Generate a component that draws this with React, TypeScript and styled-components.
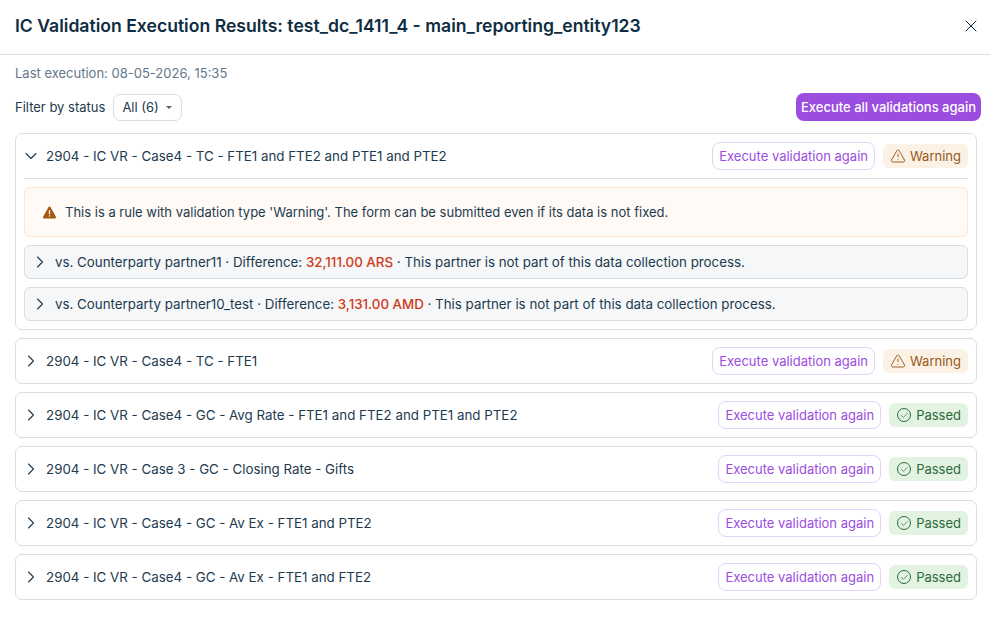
import styled, { createGlobalStyle } from "styled-components";
import { AlertTriangle, Check, ChevronDown, ChevronRight, X } from "lucide-react";

const GlobalStyle = createGlobalStyle`
  html, body {
    margin: 0;
    padding: 0;
    background: #ffffff;
  }
  body {
    font-family: "Inter", "Liberation Sans", sans-serif;
    color: #1d3a4f;
  }
  * {
    box-sizing: border-box;
  }
`;

type Status = "warning" | "passed";

const rules: { name: string; status: Status }[] = [
  { name: "2904 - IC VR - Case4 - TC - FTE1", status: "warning" },
  { name: "2904 - IC VR - Case4 - GC - Avg Rate - FTE1 and FTE2 and PTE1 and PTE2", status: "passed" },
  { name: "2904 - IC VR - Case 3 - GC - Closing Rate - Gifts", status: "passed" },
  { name: "2904 - IC VR - Case4 - GC - Av Ex - FTE1 and PTE2", status: "passed" },
  { name: "2904 - IC VR - Case4 - GC - Av Ex - FTE1 and FTE2", status: "passed" },
];

const partners = [
  { name: "partner11", amount: "32,111.00 ARS" },
  { name: "partner10_test", amount: "3,131.00 AMD" },
];

const StatusBadge: React.FC<{ status: Status }> = ({ status }) => (
  <Badge $status={status}>
    {status === "warning" ? (
      <AlertTriangle size={16} strokeWidth={1.4} />
    ) : (
      <PassedIcon>
        <Check size={9} strokeWidth={1.8} />
      </PassedIcon>
    )}
    {status === "warning" ? "Warning" : "Passed"}
  </Badge>
);

const App: React.FC = () => {
  return (
    <Page>
      <GlobalStyle />
      <Header>
        <Title>IC Validation Execution Results: test_dc_1411_4 - main_reporting_entity123</Title>
        <CloseButton>
          <X size={20} strokeWidth={1.2} />
        </CloseButton>
      </Header>
      <Body>
        <LastExecution>Last execution: 08-05-2026, 15:35</LastExecution>
        <Toolbar>
          <FilterGroup>
            <FilterLabel>Filter by status</FilterLabel>
            <FilterSelect>
              All (6)
              <Caret />
            </FilterSelect>
          </FilterGroup>
          <PrimaryButton>Execute all validations again</PrimaryButton>
        </Toolbar>
        <CardList>
          <Card>
            <CardHeader $open>
              <Toggle>
                <ChevronDown size={20} strokeWidth={1.3} />
              </Toggle>
              <RuleName>2904 - IC VR - Case4 - TC - FTE1 and FTE2 and PTE1 and PTE2</RuleName>
              <SecondaryButton>Execute validation again</SecondaryButton>
              <StatusBadge status="warning" />
            </CardHeader>
            <CardBody>
              <Notice>
                <NoticeIcon viewBox="0 0 16 16">
                  <path
                    fillRule="evenodd"
                    d="M8 1.6c.4 0 .8.2 1 .6l5.8 10.4c.4.8-.1 1.8-1 1.8H2.2c-.9 0-1.4-1-1-1.8L7 2.2c.2-.4.6-.6 1-.6zM7.3 5.6v4.2h1.4V5.6H7.3zm0 5.2v1.4h1.4v-1.4H7.3z"
                  />
                </NoticeIcon>
                This is a rule with validation type 'Warning'. The form can be submitted even if its data is not fixed.
              </Notice>
              {partners.map((partner) => (
                <PartnerRow key={partner.name}>
                  <Toggle>
                    <ChevronRight size={20} strokeWidth={1.3} />
                  </Toggle>
                  <span>
                    vs. Counterparty {partner.name} · Difference: <Amount>{partner.amount}</Amount> · This partner is
                    not part of this data collection process.
                  </span>
                </PartnerRow>
              ))}
            </CardBody>
          </Card>
          {rules.map((rule) => (
            <Card key={rule.name}>
              <CardHeader>
                <Toggle>
                  <ChevronRight size={20} strokeWidth={1.3} />
                </Toggle>
                <RuleName>{rule.name}</RuleName>
                <SecondaryButton>Execute validation again</SecondaryButton>
                <StatusBadge status={rule.status} />
              </CardHeader>
            </Card>
          ))}
        </CardList>
      </Body>
    </Page>
  );
};

export default App;

const Page = styled.div`
  width: 990px;
  height: 619px;
  overflow: hidden;
  background: #ffffff;
`;

const Header = styled.header`
  height: 55px;
  padding: 0 9px 2px 15px;
  display: flex;
  align-items: center;
  justify-content: space-between;
  border-bottom: 1px solid #d8dee4;
`;

const Title = styled.h1`
  margin: 0;
  font-size: 17.6px;
  line-height: 24px;
  font-weight: 600;
  color: #0f2d42;
`;

const CloseButton = styled.button`
  width: 20px;
  height: 20px;
  padding: 0;
  border: 0;
  background: none;
  color: #0f2d42;
  display: flex;
  cursor: pointer;
`;

const Body = styled.div`
  padding: 9px 9px 0 15px;
`;

const LastExecution = styled.div`
  font-size: 13px;
  line-height: 18px;
  color: #64778a;
`;

const Toolbar = styled.div`
  margin-top: 11px;
  height: 28px;
  display: flex;
  align-items: center;
  justify-content: space-between;
`;

const FilterGroup = styled.div`
  display: flex;
  align-items: center;
  gap: 8px;
`;

const FilterLabel = styled.span`
  font-size: 13px;
  color: #1d3a4f;
`;

const FilterSelect = styled.button`
  height: 27px;
  padding: 0 9px 0 8px;
  display: flex;
  align-items: center;
  gap: 7px;
  border: 1px solid #d8dee4;
  border-radius: 7px;
  background: #ffffff;
  font: inherit;
  font-size: 13px;
  color: #1d3a4f;
`;

const Caret = styled.span`
  width: 0;
  height: 0;
  border-left: 3px solid transparent;
  border-right: 3px solid transparent;
  border-top: 3px solid #4a6072;
`;

const PrimaryButton = styled.button`
  width: 185px;
  height: 28px;
  padding: 0;
  border: 0;
  border-radius: 8px;
  background: #9b4ddf;
  color: #ffffff;
  font: inherit;
  font-size: 13px;
  font-weight: 500;
`;

const CardList = styled.div`
  margin: 12px 4px 0 0;
  display: flex;
  flex-direction: column;
  gap: 8px;
`;

const Card = styled.section`
  border: 1px solid #d8dee4;
  border-radius: 7px;
  background: #ffffff;
  padding: 0 8px;
`;

const CardHeader = styled.div<{ $open?: boolean }>`
  height: ${(p) => (p.$open ? "45px" : "44px")};
  display: flex;
  align-items: center;
  gap: 8px;
  border-bottom: ${(p) => (p.$open ? "1px solid #d8dee4" : "0")};
`;

const Toggle = styled.span`
  width: 14px;
  display: flex;
  justify-content: center;
  color: #1d3a4f;

  svg {
    flex-shrink: 0;
  }
`;

const RuleName = styled.span`
  flex: 1;
  font-size: 13.33px;
  color: #1d3a4f;
`;

const SecondaryButton = styled.button`
  height: 28px;
  padding: 0 6px;
  border: 1px solid #e4d2fa;
  border-radius: 8px;
  background: #ffffff;
  color: #9b4ddf;
  font: inherit;
  font-size: 13px;
  white-space: nowrap;
`;

const Badge = styled.span<{ $status: Status }>`
  height: 24px;
  padding: 0 7px 0 ${(p) => (p.$status === "warning" ? "7px" : "8px")};
  display: flex;
  align-items: center;
  gap: 4px;
  border-radius: 6px;
  font-size: 13px;
  background: ${(p) => (p.$status === "warning" ? "#fbf1e5" : "#e2f3e2")};
  color: ${(p) => (p.$status === "warning" ? "#97591a" : "#2b6a3c")};
`;

const PassedIcon = styled.span`
  width: 14px;
  height: 14px;
  margin-right: 1px;
  border: 1px solid currentColor;
  border-radius: 50%;
  display: flex;
  align-items: center;
  justify-content: center;
`;

const CardBody = styled.div`
  padding: 8px 0;
  display: flex;
  flex-direction: column;
  gap: 8px;
`;

const Notice = styled.div`
  height: 50px;
  padding: 0 17px;
  display: flex;
  align-items: center;
  gap: 8px;
  border: 1px solid #fbe8d0;
  border-radius: 6px;
  background: #fffaf5;
  font-size: 13px;
  color: #1d3a4f;
`;

const NoticeIcon = styled.svg`
  width: 15px;
  height: 15px;
  fill: #a3570f;
  flex-shrink: 0;
`;

const PartnerRow = styled.div`
  height: 34px;
  padding: 0 8px;
  display: flex;
  align-items: center;
  gap: 8px;
  border: 1px solid #d8dee4;
  border-radius: 6px;
  background: #f5f7f8;
  font-size: 13.33px;
  color: #1d3a4f;
`;

const Amount = styled.span`
  color: #cf3a17;
  font-weight: 500;
`;
